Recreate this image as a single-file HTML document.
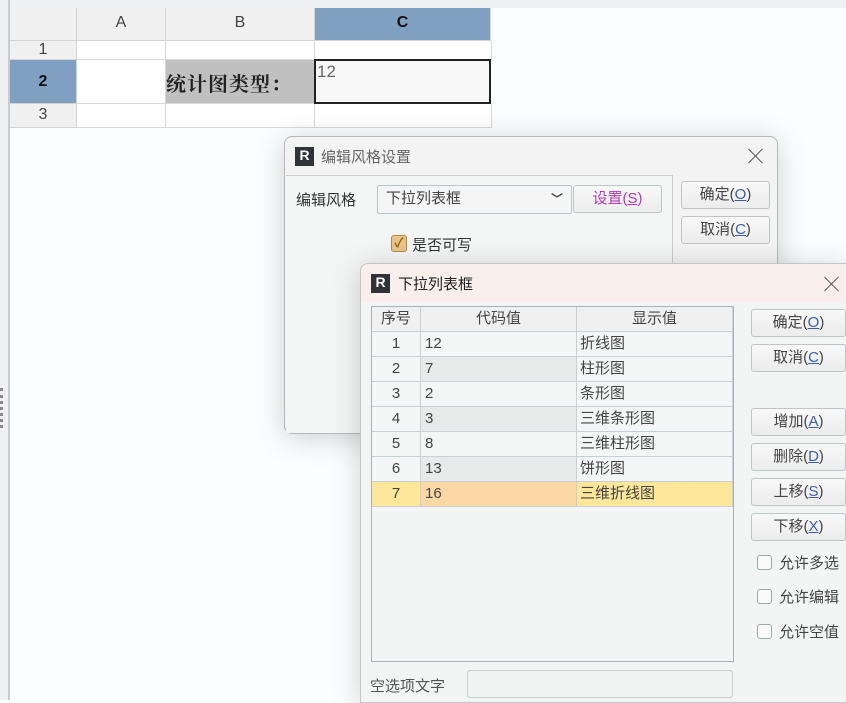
<!DOCTYPE html>
<html><head><meta charset="utf-8">
<style>
*{box-sizing:border-box;margin:0;padding:0}
body{width:846px;height:700px;overflow:hidden;background:#fbfefe;position:relative;font-family:"Liberation Sans","Noto Sans CJK SC",sans-serif;font-size:14px;color:#333}
.abs{position:absolute}
.hc{position:absolute;background:#f0f0f0;border-right:1px solid #d4d4d4;border-bottom:1px solid #d4d4d4;text-align:center;color:#444;font-size:16px}
.cell{position:absolute;border-right:1px solid #d8d8d8;border-bottom:1px solid #d8d8d8;background:#fff}
.btn{position:absolute;border:1px solid #bfc4c8;border-radius:3px;background:linear-gradient(#f8f8f8,#ececec);text-align:center;font-size:15px;color:#444;line-height:26px}
.btn u{color:#3a5fa8;text-decoration:underline}
.logo{position:absolute;width:19px;height:19px;background:#2f3338;color:#fff;font:bold 14px "Liberation Sans",sans-serif;text-align:center;line-height:17px}
.row{position:absolute;left:0;width:361px;height:25px;border-bottom:1px solid #c8d0d6}
.row div{position:absolute;top:0;height:24px;line-height:24px;font-size:15px;color:#444;border-right:1px solid #c8d0d6}
.cb{position:absolute;width:15px;height:15px;border:1px solid #9aa;border-radius:3px;background:#fafafa}
.x{position:absolute;width:16px;height:16px}
.x:before,.x:after{content:"";position:absolute;left:7px;top:-2px;width:1.3px;height:20px;background:#555;transform:rotate(45deg)}
.x:after{transform:rotate(-45deg)}
</style></head><body>
<div class="abs" style="left:0;top:0;width:846px;height:8px;background:#eef0f1"></div>
<div class="abs" style="left:0;top:0;width:10px;height:700px;background:#eef0f1;border-right:2px solid #c9cccf"></div>
<div class="abs" style="left:0;top:388px;width:3px;height:40px;border-left:3px dotted #888"></div>
<div class="hc" style="left:10px;top:8px;width:67px;height:33px"></div>
<div class="hc" style="left:77px;top:8px;width:89px;height:33px;line-height:30px">A</div>
<div class="hc" style="left:166px;top:8px;width:149px;height:33px;line-height:30px">B</div>
<div class="hc" style="left:315px;top:8px;width:176px;height:33px;line-height:30px;background:#7fa0c0;color:#111;font-weight:bold">C</div>
<div class="hc" style="left:10px;top:41px;width:67px;height:19px;line-height:18px">1</div>
<div class="hc" style="left:10px;top:60px;width:67px;height:44px;line-height:44px;background:#7fa0c0;color:#111;font-weight:bold">2</div>
<div class="hc" style="left:10px;top:104px;width:67px;height:24px;line-height:22px">3</div>
<div class="cell" style="left:77px;top:41px;width:89px;height:19px"></div>
<div class="cell" style="left:166px;top:41px;width:149px;height:19px"></div>
<div class="cell" style="left:315px;top:41px;width:177px;height:19px"></div>
<div class="cell" style="left:77px;top:60px;width:89px;height:44px"></div>
<div class="cell" style="left:166px;top:60px;width:149px;height:44px;background:#c0c0c0;font:bold 20px 'Noto Serif CJK SC',serif;color:#222;line-height:46px;letter-spacing:1px">统计图类型：</div>
<div class="abs" style="left:314px;top:59px;width:177px;height:45px;border:2px solid #222;background:#f8f8f8;color:#666;font-size:17px;padding:1px 0 0 1px">12</div>
<div class="cell" style="left:77px;top:104px;width:89px;height:24px"></div>
<div class="cell" style="left:166px;top:104px;width:149px;height:24px"></div>
<div class="cell" style="left:315px;top:104px;width:177px;height:24px"></div>

<div class="abs" style="left:284px;top:136px;width:494px;height:298px;background:#f3f3f3;border:1px solid #b8b8b8;border-radius:8px;box-shadow:0 4px 30px rgba(0,0,0,0.18)">
  <div class="logo" style="left:10px;top:10px">R</div>
  <div class="abs" style="left:36px;top:9px;font-size:15px;color:#666">编辑风格设置</div>
  <div class="x" style="left:463px;top:11px"></div>
  <div class="abs" style="left:1px;top:38px;width:387px;height:258px;border-top:1px solid #ccc;border-right:1px solid #ccc;background:#f4f5f5"></div>
  <div class="abs" style="left:11px;top:52px;font-size:15px;color:#333">编辑风格</div>
  <div class="abs" style="left:92px;top:48px;width:195px;height:29px;border:1px solid #bcc3c9;border-radius:2px;background:#f5f5f5;padding-left:8px;line-height:26px;font-size:15px;color:#444">下拉列表框<span style="position:absolute;right:8px;top:0;font-size:12px;font-weight:bold">﹀</span></div>
  <div class="btn" style="left:288px;top:48px;width:89px;height:28px;color:#b03cb0">设置(<u style="color:#b03cb0">S</u>)</div>
  <div class="btn" style="left:396px;top:44px;width:89px;height:28px">确定(<u>O</u>)</div>
  <div class="btn" style="left:396px;top:79px;width:89px;height:28px">取消(<u>C</u>)</div>
  <div class="abs" style="left:106px;top:98px;width:16px;height:17px;border-radius:3px;background:#e8c58a;border:1px solid #b08a50;color:#a06010;font-size:13px;line-height:14px;text-align:center;font-weight:bold">✓</div>
  <div class="abs" style="left:127px;top:97px;font-size:15px;color:#333">是否可写</div>
</div>

<div class="abs" style="left:360px;top:263px;width:490px;height:440px;background:#f3f4f4;border:1px solid #c4c4c4;border-radius:8px 0 0 0;box-shadow:0 4px 30px rgba(0,0,0,0.18);overflow:hidden">
  <div class="abs" style="left:0;top:0;width:490px;height:38px;background:#f8efed"></div>
  <div class="logo" style="left:10px;top:10px">R</div>
  <div class="abs" style="left:37px;top:9px;font-size:15px;color:#222">下拉列表框</div>
  <div class="x" style="left:463px;top:12px"></div>
  <div class="abs" style="left:10px;top:42px;width:363px;height:356px;border:1px solid #a9b0b6;background:#f3f4f4">
    <div class="row" style="top:0;background:#f0f0f0"><div style="left:0;width:49px;text-align:center">序号</div><div style="left:49px;width:156px;text-align:center">代码值</div><div style="left:205px;width:156px;text-align:center">显示值</div></div>
    <div class="row" style="top:25px;background:#f4f5f5"><div style="left:0;width:49px;text-align:center">1</div><div style="left:49px;width:156px;padding-left:4px">12</div><div style="left:205px;width:156px;padding-left:3px">折线图</div></div>
    <div class="row" style="top:50px;background:#f4f5f5"><div style="left:0;width:49px;text-align:center">2</div><div style="left:49px;width:156px;padding-left:4px;background:#e8e9e9">7</div><div style="left:205px;width:156px;padding-left:3px">柱形图</div></div>
    <div class="row" style="top:75px;background:#f4f5f5"><div style="left:0;width:49px;text-align:center">3</div><div style="left:49px;width:156px;padding-left:4px">2</div><div style="left:205px;width:156px;padding-left:3px">条形图</div></div>
    <div class="row" style="top:100px;background:#f4f5f5"><div style="left:0;width:49px;text-align:center">4</div><div style="left:49px;width:156px;padding-left:4px;background:#e8e9e9">3</div><div style="left:205px;width:156px;padding-left:3px">三维条形图</div></div>
    <div class="row" style="top:125px;background:#f4f5f5"><div style="left:0;width:49px;text-align:center">5</div><div style="left:49px;width:156px;padding-left:4px">8</div><div style="left:205px;width:156px;padding-left:3px">三维柱形图</div></div>
    <div class="row" style="top:150px;background:#f4f5f5"><div style="left:0;width:49px;text-align:center">6</div><div style="left:49px;width:156px;padding-left:4px;background:#e8e9e9">13</div><div style="left:205px;width:156px;padding-left:3px">饼形图</div></div>
    <div class="row" style="top:175px;background:#fde79a"><div style="left:0;width:49px;text-align:center">7</div><div style="left:49px;width:156px;padding-left:4px;background:#fcd9a4">16</div><div style="left:205px;width:156px;padding-left:3px">三维折线图</div></div>
  </div>
  <div class="btn" style="left:390px;top:45px;width:95px;height:28px">确定(<u>O</u>)</div>
  <div class="btn" style="left:390px;top:80px;width:95px;height:28px">取消(<u>C</u>)</div>
  <div class="btn" style="left:390px;top:144px;width:95px;height:28px">增加(<u>A</u>)</div>
  <div class="btn" style="left:390px;top:179px;width:95px;height:28px">删除(<u>D</u>)</div>
  <div class="btn" style="left:390px;top:214px;width:95px;height:28px">上移(<u>S</u>)</div>
  <div class="btn" style="left:390px;top:249px;width:95px;height:28px">下移(<u>X</u>)</div>
  <div class="cb" style="left:396px;top:291px"></div><div class="abs" style="left:418px;top:288px;font-size:15px;color:#444">允许多选</div>
  <div class="cb" style="left:396px;top:325px"></div><div class="abs" style="left:418px;top:322px;font-size:15px;color:#444">允许编辑</div>
  <div class="cb" style="left:396px;top:360px"></div><div class="abs" style="left:418px;top:357px;font-size:15px;color:#444">允许空值</div>
  <div class="abs" style="left:9px;top:411px;font-size:15px;color:#555">空选项文字</div>
  <div class="abs" style="left:106px;top:406px;width:266px;height:28px;border:1px solid #c8cdd1;border-radius:3px;background:#f1f2f2"></div>
</div>
</body></html>
